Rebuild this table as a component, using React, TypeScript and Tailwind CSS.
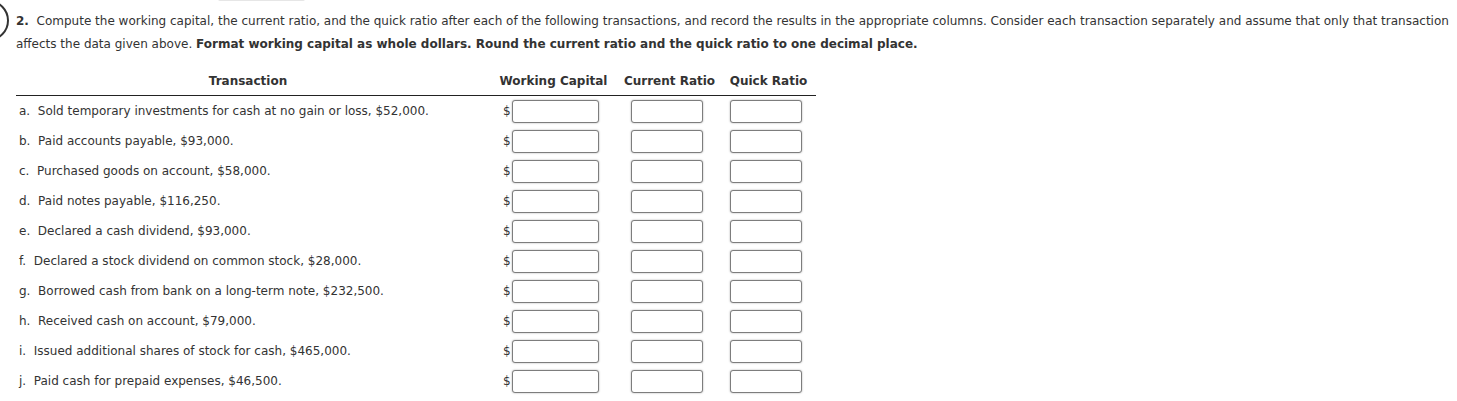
const rows = [
  ["a.", "Sold temporary investments for cash at no gain or loss, $52,000."],
  ["b.", "Paid accounts payable, $93,000."],
  ["c.", "Purchased goods on account, $58,000."],
  ["d.", "Paid notes payable, $116,250."],
  ["e.", "Declared a cash dividend, $93,000."],
  ["f.", "Declared a stock dividend on common stock, $28,000."],
  ["g.", "Borrowed cash from bank on a long-term note, $232,500."],
  ["h.", "Received cash on account, $79,000."],
  ["i.", "Issued additional shares of stock for cash, $465,000."],
  ["j.", "Paid cash for prepaid expenses, $46,500."],
];

const Box = ({ w }: { w: string }) => (
  <input
    type="text"
    className={`${w} h-[23px] rounded-[3px] border border-[#7d7d7d] bg-white shadow-[0_0_2px_rgba(0,0,0,0.35)] outline-none`}
  />
);

export default function App() {
  return (
    <div className="relative min-h-[401px] w-[1457px] overflow-hidden bg-white font-['DejaVu_Sans',Verdana,sans-serif] text-[12px] text-[#333]">
      {/* left marker ring + faint bar at the top */}
      <div className="absolute -left-[32px] top-0 h-[41px] w-[41px] rounded-full border-2 border-[#333]" />
      <div className="absolute left-[218px] -top-[3px] h-[4px] w-[87px] rounded-[3px] bg-[#e6e6e6]" />

      <div className="pl-4 pt-[10px]">
        <p className="leading-[23px]">
          <b>2.</b>
          {"\u00a0 "}Compute the working capital, the current ratio, and the quick ratio after each of the following
          transactions, and record the results in the appropriate columns. Consider each transaction separately and assume
          that only that transaction affects the data given above.{" "}
          <b>
            Format working capital as whole dollars. Round the current ratio and the quick ratio to one decimal place.
          </b>
        </p>

        <div className="mt-[10px] w-[800px]">
          <div className="flex h-[30px] items-center border-b border-[#222] font-bold">
            <div className="w-[464px] text-center">Transaction</div>
            <div className="w-[138px] pl-[9px] text-center">Working Capital</div>
            <div className="w-[103px] text-center">Current Ratio</div>
            <div className="w-[95px] text-center">Quick Ratio</div>
          </div>
          {rows.map(([k, r]) => (
            <div key={k} className="flex h-[30px] items-center">
              <div className="w-[464px] pl-[3px]">
                {k}
                {"\u00a0 "}
                {r}
              </div>
              <div className="flex w-[138px] items-center pl-[23px]">
                <span className="mr-[1px]">$</span>
                <Box w="w-[87px]" />
              </div>
              <div className="w-[102px] pl-[13px]">
                <Box w="w-[72px]" />
              </div>
              <div className="w-[96px] pl-[10px]">
                <Box w="w-[72px]" />
              </div>
            </div>
          ))}
        </div>
      </div>
    </div>
  );
}
